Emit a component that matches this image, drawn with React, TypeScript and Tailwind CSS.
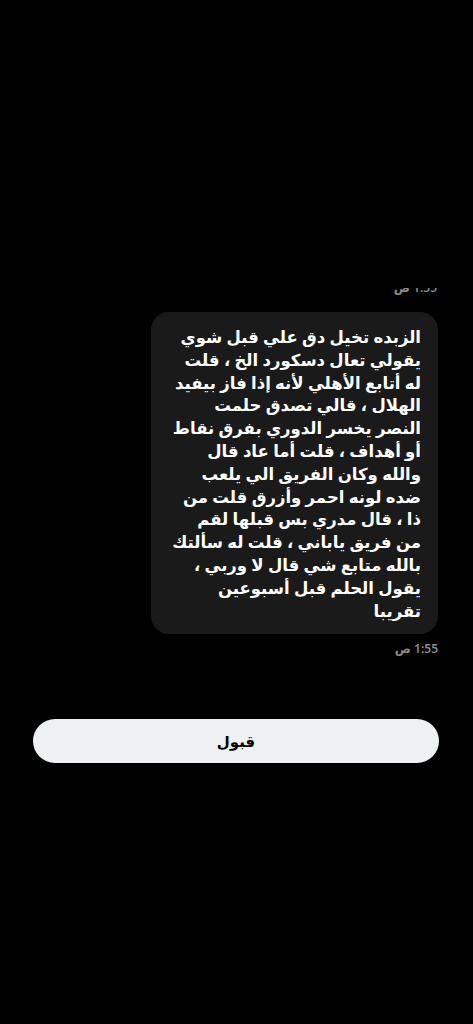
import React from "react";

const lines = [
  "الزبده تخيل دق علي قبل شوي",
  "يقولي تعال دسكورد الخ ، قلت",
  "له أتابع الأهلي لأنه إذا فاز بيفيد",
  "الهلال ، قالي تصدق حلمت",
  "النصر يخسر الدوري بفرق نقاط",
  "أو أهداف ، قلت أما عاد قال",
  "والله وكان الفريق الي يلعب",
  "ضده لونه احمر وأزرق قلت من",
  "ذا ، قال مدري بس قبلها لقم",
  "من فريق ياباني ، قلت له سألتك",
  "بالله متابع شي قال لا وربي ،",
  "يقول الحلم قبل أسبوعين",
  "تقريبا",
];

export default function App() {
  return (
    <div
      className="w-[473px] h-[1024px] bg-black overflow-hidden flex flex-col"
      style={{ fontFamily: '"Noto Sans", "DejaVu Sans", sans-serif' }}
    >
      <div className="h-[288px]" />
      {/* timestamp cut off by the top of the view */}
      <div className="h-[9px] overflow-hidden flex justify-end pr-[36px]">
        <div dir="rtl" className="mt-[-9px] text-[12px] leading-[18px] text-[#8a8a8a] font-semibold">
          1:55 ص
        </div>
      </div>
      <div className="h-[15px]" />
      <div className="flex justify-end pr-[35px]">
        <div
          dir="rtl"
          className="w-[287px] rounded-[18px] bg-[#1a1a1a] pt-[14px] pb-[12px] pr-[17px] text-white font-bold text-[16.5px] leading-[22.8px]"
        >
          {lines.map((l, i) => (
            <div key={i} className="whitespace-nowrap">
              {l}
            </div>
          ))}
        </div>
      </div>
      <div className="flex justify-end pr-[35px] pt-[6px]">
        <div dir="rtl" className="text-[12px] leading-[18px] text-[#8a8a8a] font-semibold">
          1:55 ص
        </div>
      </div>
      <div className="h-[61px]" />
      <div className="px-[33px]">
        <div
          dir="rtl"
          className="h-[44px] w-[406px] rounded-full bg-[#eef1f2] flex items-center justify-center text-black font-bold text-[15px]"
        >
          قبول
        </div>
      </div>
    </div>
  );
}
